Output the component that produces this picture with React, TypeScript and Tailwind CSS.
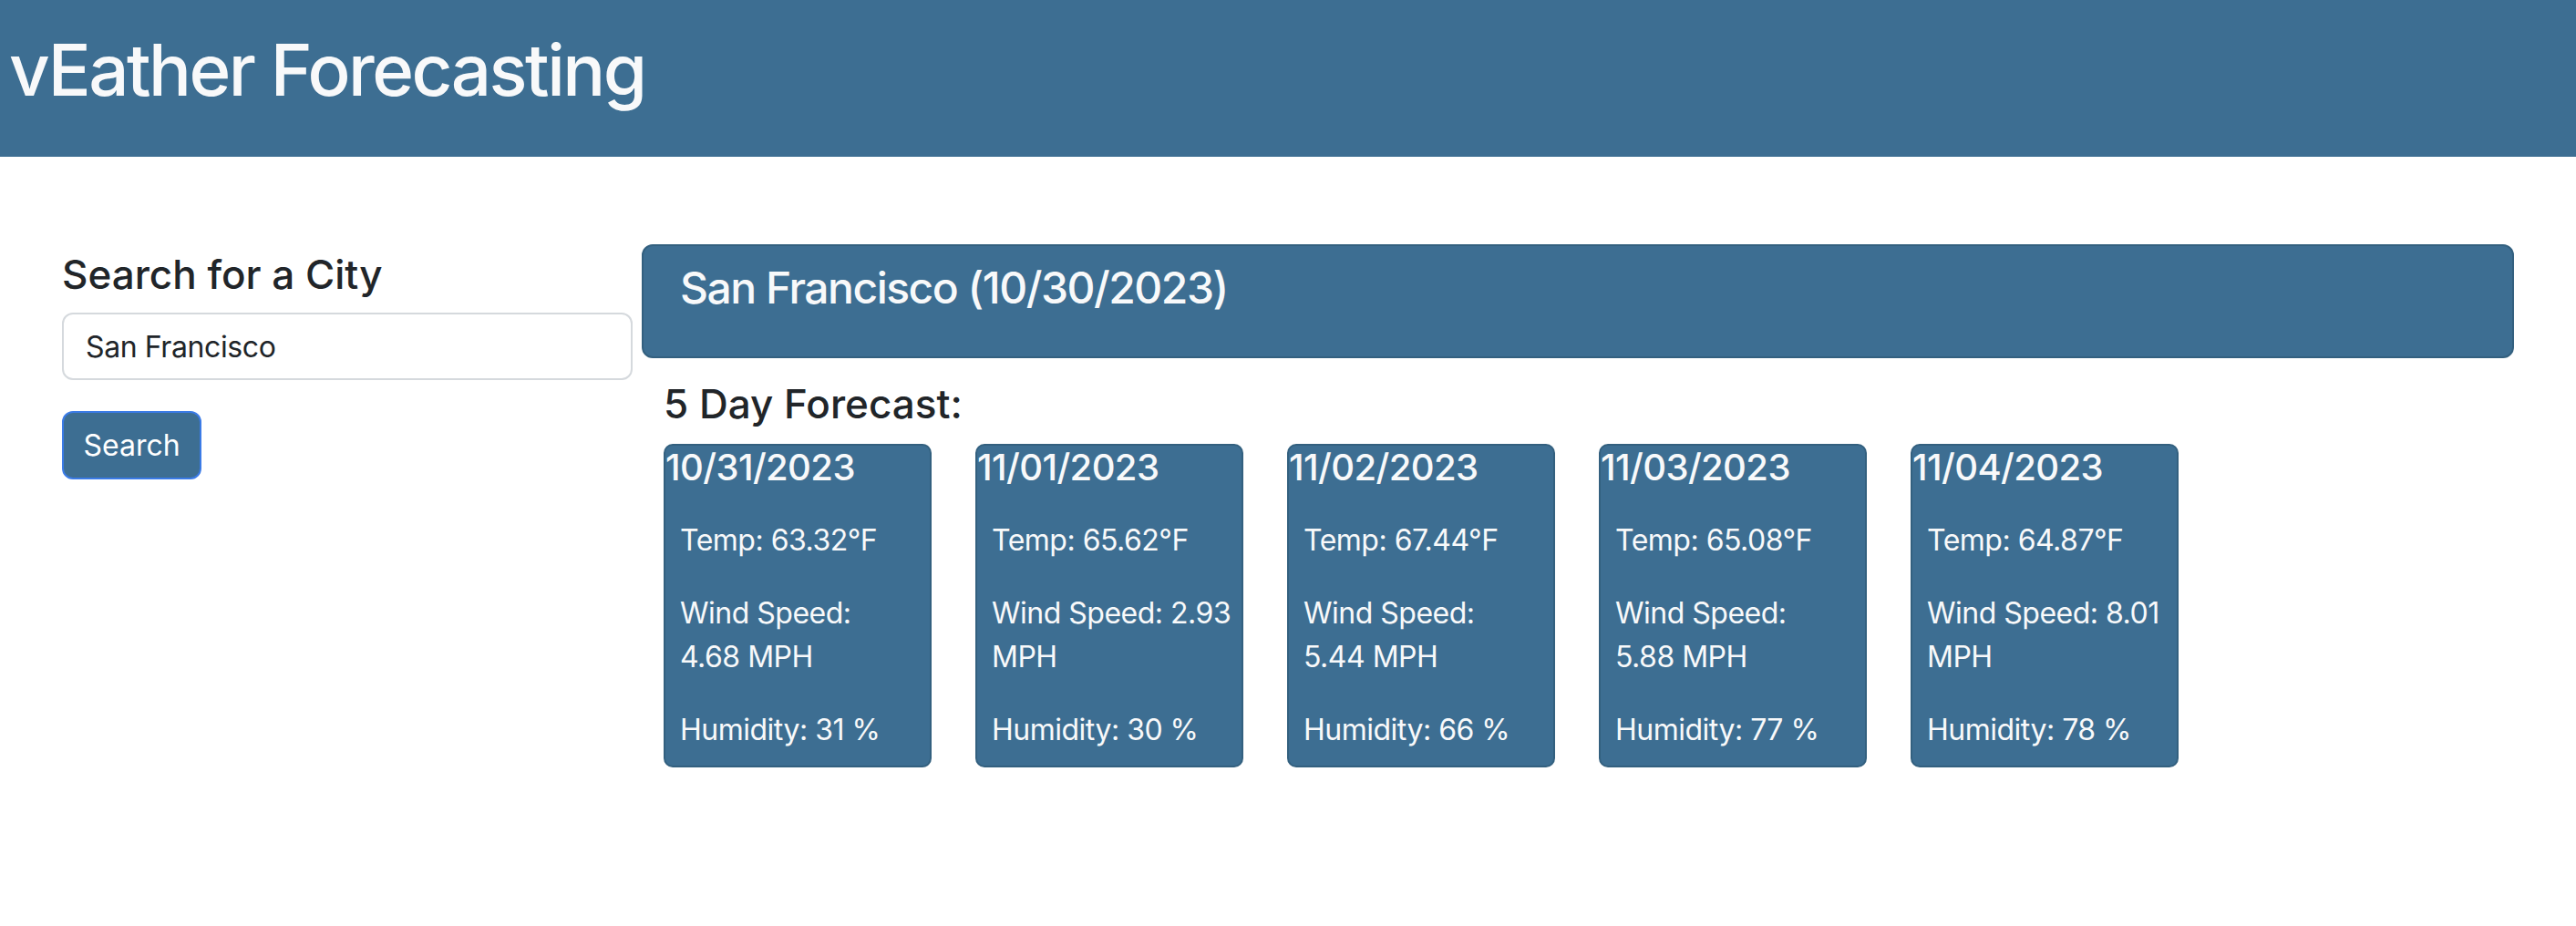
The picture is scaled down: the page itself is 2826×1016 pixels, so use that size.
import React from "react";

type Day = {
  date: string;
  temp: string;
  wind: [string, string];
  humidity: string;
};

const days: Day[] = [
  { date: "10/31/2023", temp: "63.32", wind: ["Wind Speed:", "4.68 MPH"], humidity: "31" },
  { date: "11/01/2023", temp: "65.62", wind: ["Wind Speed: 2.93", "MPH"], humidity: "30" },
  { date: "11/02/2023", temp: "67.44", wind: ["Wind Speed:", "5.44 MPH"], humidity: "66" },
  { date: "11/03/2023", temp: "65.08", wind: ["Wind Speed:", "5.88 MPH"], humidity: "77" },
  { date: "11/04/2023", temp: "64.87", wind: ["Wind Speed: 8.01", "MPH"], humidity: "78" },
];

function ForecastCard({ day }: { day: Day }) {
  return (
    <div className="w-[294px] h-[355px] shrink-0 rounded-[10px] border-2 border-[#33607f] bg-[#3d6e92] text-[#f8f9fa]">
      <h5 className="text-[40px] leading-[48px] font-medium tracking-[-0.6px]">{day.date}</h5>
      <div className="pl-[16px] text-[32px] leading-[48px] tracking-[-0.5px]">
        <p className="mt-[32px] whitespace-nowrap">Temp: {day.temp}°F</p>
        <p className="mt-[32px] whitespace-nowrap">
          {day.wind[0]}
          <br />
          {day.wind[1]}
        </p>
        <p className="mt-[32px] whitespace-nowrap">Humidity: {day.humidity} %</p>
      </div>
    </div>
  );
}

export default function App() {
  return (
    <div className="min-h-screen bg-white font-['Inter','Noto_Sans',sans-serif] text-[#212529]">
      {/* Top banner */}
      <header className="h-[172px] bg-[#3d6e92] pl-[10px] pt-[38px]">
        <h1 className="text-[78px] leading-none font-medium tracking-[-2.5px] text-[#f8f9fa]">vEather Forecasting</h1>
      </header>

      <main className="flex pl-[68px] pt-[96px]">
        {/* Search column */}
        <aside className="w-[626px] shrink-0">
          <h4 className="mt-[11px] text-[44px] leading-none font-medium">Search for a City</h4>
          <input
            type="text"
            defaultValue="San Francisco"
            className="mt-[20px] block h-[74px] w-full rounded-[12px] border-2 border-[#d5d9dd] bg-white px-[24px] text-[32px] tracking-[-0.4px] text-[#212529] outline-none"
          />
          <button className="mt-[34px] h-[75px] w-[153px] rounded-[12px] border-2 border-[#3b7be6] bg-[#3d6e92] text-[32px] text-white">
            Search
          </button>
        </aside>

        {/* Results column */}
        <section className="ml-[10px] w-[2054px] shrink-0">
          <div className="h-[125px] rounded-[12px] border-2 border-[#33607f] bg-[#3d6e92] pl-[40px] pt-[22px]">
            <h3 className="text-[48px] leading-none font-medium tracking-[-1.5px] text-[#f8f9fa]">
              San Francisco (10/30/2023)
            </h3>
          </div>

          <div className="pl-[24px]">
            <h4 className="mt-[28px] text-[44px] leading-none font-medium">5 Day Forecast:</h4>
            <div className="mt-[22px] flex gap-[48px]">
              {days.map((d) => (
                <ForecastCard key={d.date} day={d} />
              ))}
            </div>
          </div>
        </section>
      </main>
    </div>
  );
}
